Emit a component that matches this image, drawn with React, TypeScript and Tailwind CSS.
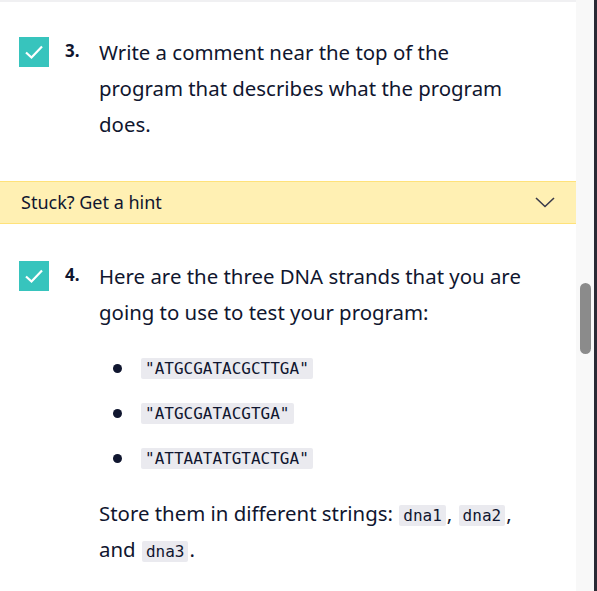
import { ReactNode } from "react";

const sans = "font-['Noto_Sans',sans-serif]";
const mono = "font-['DejaVu_Sans_Mono',monospace]";

const Check = () => (
  <div className="w-[30px] h-[30px] shrink-0 bg-[#37c4bd] flex items-center justify-center">
    <svg width="20" height="16" viewBox="0 0 20 16" fill="none">
      <path d="M2 8.5 L7.5 13.5 L18 2.5" stroke="white" strokeWidth="2.2" />
    </svg>
  </div>
);

const Code = ({ children }: { children: ReactNode }) => (
  <code className={`${mono} bg-[#eaeaef] rounded-[2px] px-[4px] py-[1px] mx-[1px] text-[16px] leading-[19px] text-[#10162f]`}>
    {children}
  </code>
);

const Step = ({ n, children }: { n: number; children: ReactNode }) => (
  <div className="flex pl-[19px]">
    <Check />
    <div className="w-[36px] pl-[16px] pt-[2px] text-[17px] font-bold leading-[24px]">{n}.</div>
    <div className="flex-1 pl-[14px] pr-[47px] text-[20.4px] leading-[36px] -mt-[3px]">{children}</div>
  </div>
);

const strands = ['"ATGCGATACGCTTGA"', '"ATGCGATACGTGA"', '"ATTAATATGTACTGA"'];

export default function App() {
  return (
    <div className={`${sans} flex w-[597px] h-[591px] overflow-hidden text-[#10162f] bg-white`}>
      <div className="w-[576px] flex flex-col">
        <div className="h-[2px] bg-[#f0f0f2]" />
        <div className="pt-[35px]">
          <Step n={3}>Write a comment near the top of the program that describes what the program does.</Step>
        </div>
        <div className="mt-[39px] h-[43px] bg-[#fff0b3] border-y border-[#ffe27a] flex items-center justify-between pl-[21px] pr-[21px]">
          <span className="text-[18px] text-[#10162f]">Stuck? Get a hint</span>
          <svg width="20" height="11" viewBox="0 0 20 11" fill="none">
            <path d="M1 1 L10 9.5 L19 1" stroke="#3a3a4a" strokeWidth="1.6" />
          </svg>
        </div>
        <div className="pt-[37px]">
          <Step n={4}>
            Here are the three DNA strands that you are going to use to test your program:
            <ul className="mt-[16px] mb-[14px] flex flex-col">
              {strands.map((s) => (
                <li key={s} className="flex items-center h-[45px]">
                  <span className="w-[9px] h-[9px] rounded-full bg-[#10162f] ml-[14px] mr-[18px]" />
                  <Code>{s}</Code>
                </li>
              ))}
            </ul>
            Store them in different strings: <Code>dna1</Code>, <Code>dna2</Code>, and <Code>dna3</Code>.
          </Step>
        </div>
      </div>
      <div className="w-[21px] bg-[#f8f8f8] border-r-[3px] border-[#2a2a35] flex flex-col items-center">
        <div className="mt-[283px] w-[11px] h-[71px] rounded-full bg-[#8b8b8b]" />
      </div>
    </div>
  );
}
